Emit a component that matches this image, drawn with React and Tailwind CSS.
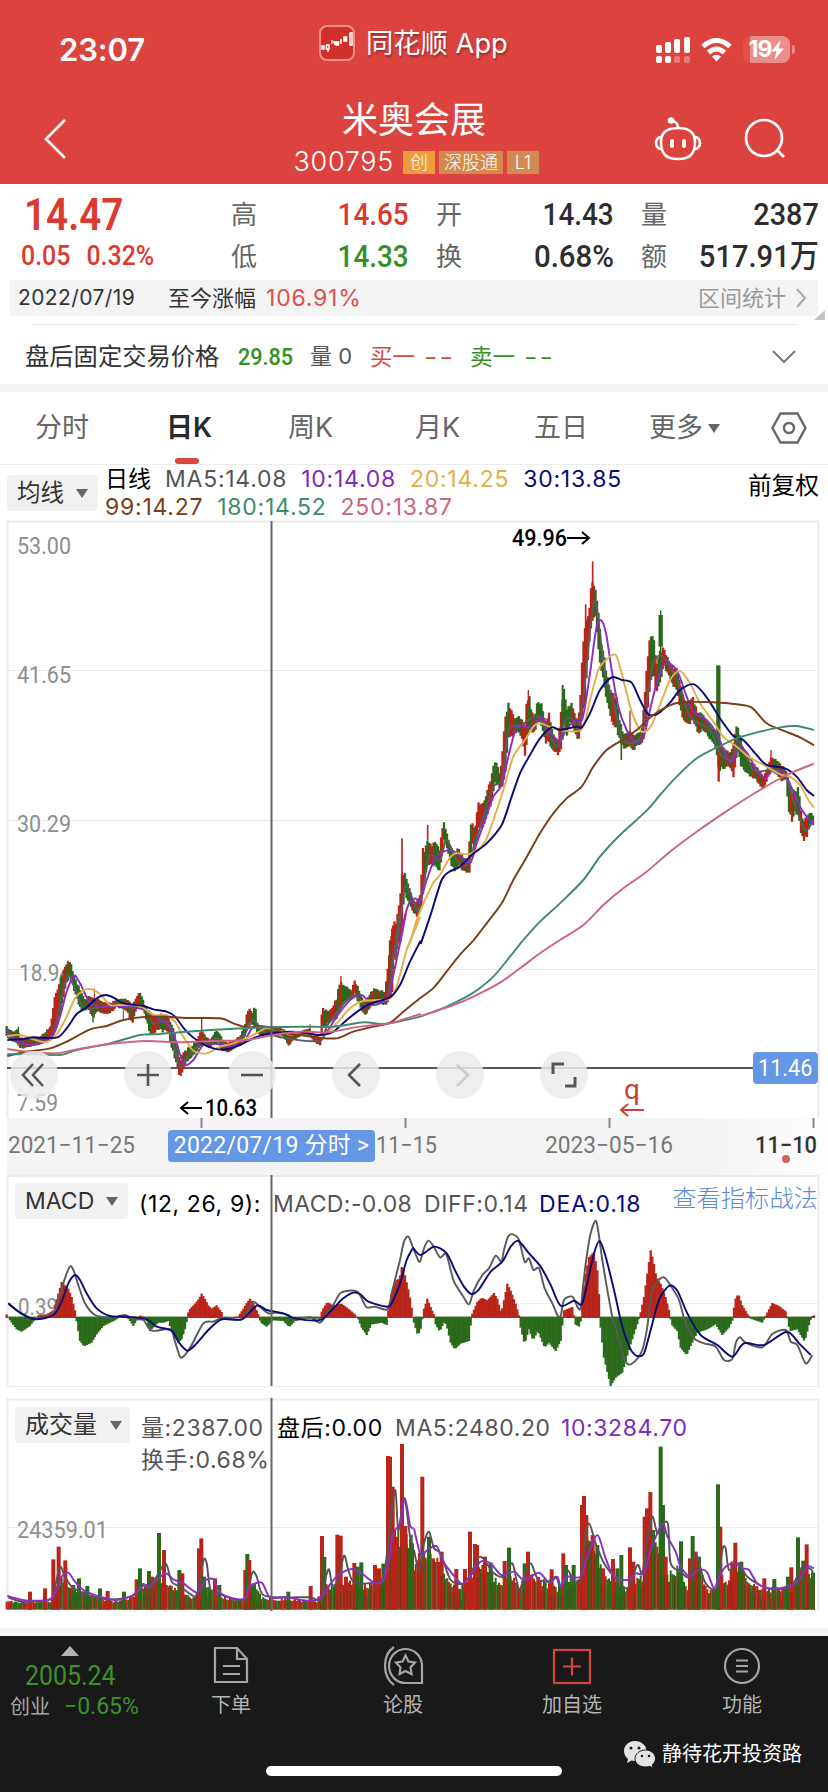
import React from "react";

const RED = "#b92519";
const GREEN = "#2c6a1b";
const AXIS_FONT = "Roboto, 'Liberation Sans', sans-serif";

// Plot coordinates are in thirds of a pixel, relative to the group they are drawn in.
// [x, high, low, direction]  r = up, g = down, m = mixed
const candlesLeft = `20 318 350 g,32 327 365 g,42 333 365 g,52 322 370 g,60 350 388 m,80 355 385 m,100 350 380 m,120 350 372 m,140 327 370 m,152 318 355 r,160 250 345 r,170 200 330 r,180 170 290 r,190 145 240 r,198 122 200 r,210 125 170 g,215 130 190 g,222 165 215 g,232 185 245 g,245 215 275 g,255 238 272 g,265 225 272 m,280 232 300 g,295 235 275 m,315 245 285 r,335 245 278 r,350 238 262 m,370 232 270 g,385 240 285 m,396 250 315 m,407 235 280 r,415 218 260 r,422 215 262 g,435 255 285 g,450 270 350 g,460 285 350 r,475 285 330 m,490 275 340 g,505 290 335 r,515 300 390 g,525 340 425 g,532 380 445 g,540 420 475 r,548 400 460 r,560 385 430 r,575 375 415 g,590 360 400 g,600 330 385 r,607 325 375 r,615 345 375 g,630 360 385 m,645 332 372 g,655 332 370 g,665 350 395 m,680 365 400 m,700 360 388 r,720 345 375 r,735 315 355 g,742 265 320 r,750 262 315 r,758 275 320 g,766 253 325 g,772 310 340 g,790 325 355 m,820 315 345 m,850 325 350 g,865 345 380 m,880 345 362 m,910 330 345 m,930 325 350 m,945 345 368 r,962 350 378 r,966 255 345 r,975 265 320 g,990 268 310 m,1000 255 305 r,1010 230 300 r,1015 195 290 r,1023 175 270 r,1032 195 250 g,1045 200 245 g,1055 210 240 m,1064 178 225 r,1075 200 250 g,1085 225 275 g,1095 245 290 m,1110 215 265 m,1125 200 250 m,1140 208 255 g,1155 208 260 m,1163 140 265 r,1172 65 240 r,1180 -5 200 r`;
const candlesRight = `90 1200 1340 r,100 1130 1290 r,108 1140 1250 r,118 1080 1210 r,126 990 1190 r,133 990 1060 g,145 1030 1090 g,160 1080 1120 g,172 1080 1135 m,182 1050 1120 r,188 905 1080 r,195 930 1020 r,203 885 980 g,215 915 980 r,228 898 980 g,238 930 1000 g,245 860 960 r,252 843 900 g,262 880 930 g,272 915 975 g,285 940 1000 g,295 920 980 m,310 950 995 m,325 955 1000 g,330 860 1000 r,337 845 920 g,345 870 930 m,355 775 880 r,365 790 870 r,375 770 850 m,385 735 820 m,395 700 790 r,403 655 740 g,412 670 730 g,420 700 755 m,428 620 740 r,436 510 720 r,445 485 610 g,455 510 600 r,465 535 580 g,475 525 580 g,485 535 600 m,495 545 650 r,500 480 630 r,507 452 570 g,515 510 585 r,525 520 580 m,533 480 550 g,545 490 560 g,555 540 610 m,567 512 620 r,575 560 625 g,585 585 640 m,595 600 650 r,603 510 640 r,612 433 560 g,620 510 600 g,632 482 545 g,643 510 580 m,653 540 605 m,660 490 600 r,668 290 550 r,678 200 480 r,685 230 340 m,692 150 290 r,698 110 240 r,708 145 240 g,715 200 330 g,722 290 390 g,732 340 440 g,742 400 500 g,750 440 530 g,760 450 555 r,770 470 570 g,780 540 610 g,790 575 625 m,800 580 630 g,810 570 620 r,820 580 640 m,830 580 620 g,845 570 615 m,853 465 590 r,862 350 540 r,871 265 450 r,880 275 400 g,890 360 470 r,900 330 430 g,912 320 380 r,920 345 400 g,930 365 420 m,940 385 440 m,950 375 460 g,962 430 520 g,972 470 550 g,985 490 560 m,997 465 550 r,1010 500 565 m,1015 520 590 r,1025 510 570 g,1035 530 580 m,1050 550 600 g,1065 570 620 g,1078 600 700 r,1085 610 690 g,1095 620 690 m,1110 640 680 m,1120 600 725 r,1132 548 640 g,1145 600 690 g,1155 640 700 g,1170 660 710 g,1185 670 720 m,1200 690 740 m,1212 705 752 r,1222 680 720 r,1233 650 700 r,1245 655 700 g,1265 670 725 m,1278 690 720 m,1285 710 810 g,1295 740 850 r,1305 750 820 m,1315 735 840 g,1325 820 890 m,1332 840 905 r,1342 820 890 m,1352 815 850 g,1362 825 860 g`;

// thin outliers: [x, top, bottom, colour, width]
const wicksLeft = [
  [204, 122, 160, RED, 5], [283, 205, 240, RED, 3], [279, 270, 308, GREEN, 4], [370, 260, 297, GREEN, 3],
  [605, 292, 350, RED, 4], [930, 312, 340, RED, 3], [1023, 168, 200, RED, 4], [55, 320, 345, GREEN, 4],
];
const wicksRight = [
  [126, 895, 1100, RED, 5], [203, 855, 900, RED, 5], [698, 64, 150, RED, 5], [677, 193, 300, RED, 5],
  [784, 600, 660, GREEN, 5], [810, 512, 590, RED, 4], [902, 225, 320, GREEN, 13], [902, 211, 340, GREEN, 4],
  [1075, 376, 620, GREEN, 13], [1076, 640, 725, RED, 7], [1233, 630, 660, RED, 4],
  [608, 435, 520, GREEN, 6], [505, 450, 500, RED, 4],
];

const maLeft = [
  ["#5c5c5c", "20 340,60 372,120 368,155 350,172 290,190 210,206 165,224 205,250 262,300 262,350 250,400 262,430 258,460 310,500 305,520 370,540 440,570 400,610 370,650 355,690 380,735 340,760 300,790 335,860 355,960 362,980 320,1020 265,1060 225,1100 255,1160 235,1180 110,1200 -20"],
  ["#8a2fc4", "20 330,50 360,90 374,130 368,160 345,180 290,200 215,222 167,240 190,270 248,310 262,350 258,400 262,440 272,480 300,510 318,530 370,552 434,580 420,610 375,650 372,690 378,730 368,760 320,800 322,850 335,900 340,950 345,980 335,1010 290,1050 240,1085 225,1110 245,1160 240,1180 165,1200 70,1218 -20"],
  ["#e2b04a", "22 348,60 345,100 358,140 366,172 340,200 290,225 235,250 212,275 208,300 222,330 255,360 255,420 258,460 285,500 285,525 305,550 350,580 392,620 400,660 380,700 370,750 350,800 325,850 335,900 340,970 345,1010 310,1050 265,1090 243,1165 237,1190 200,1220 90,1245 30,1260 -10"],
  ["#0a0a78", "22 360,70 357,100 352,170 353,200 325,230 282,260 262,290 235,318 225,345 235,370 250,430 258,460 268,500 275,525 290,560 335,600 367,640 385,680 388,720 375,760 355,800 342,880 335,960 345,1000 335,1040 300,1090 262,1130 245,1170 232,1200 195,1230 125,1262 62"],
  ["#7b3d18", "22 408,80 395,150 385,200 365,270 328,320 318,370 300,440 290,500 290,560 294,660 295,700 310,740 322,800 320,860 340,900 345,950 352,1010 355,1060 335,1120 320,1170 308,1210 275,1260 235"],
  ["#3f8a70", "22 403,100 402,180 405,230 390,330 370,420 345,480 342,560 335,700 326,800 322,900 320,1000 320,1090 307,1140 312,1180 308,1260 290"],
  ["#cf6480", "22 387,80 395,170 400,230 388,330 372,440 363,540 367,640 363,740 360,820 345,900 335,980 337,1080 320,1170 310,1210 298,1262 282"],
];
const maRight = [
  ["#5c5c5c", "105 1260,118 1160,135 1040,155 1070,175 1110,195 1010,210 945,240 960,260 900,290 960,320 975,345 910,370 830,400 740,425 720,445 570,480 560,505 540,535 530,570 590,595 620,615 540,640 540,655 565,672 450,695 230,708 190,735 400,760 490,790 600,840 595,862 470,880 370,910 350,960 440,990 530,1050 570,1080 640,1115 660,1135 600,1180 690,1230 690,1275 700,1300 780,1335 870,1360 840"],
  ["#8a2fc4", "120 1210,130 1150,145 1095,165 1075,180 1085,200 1020,225 955,250 935,275 932,300 945,330 970,350 910,375 840,400 770,425 735,445 650,470 560,495 560,520 560,545 530,570 575,600 605,620 565,650 540,668 535,690 400,708 270,722 240,738 280,755 390,775 500,800 570,825 605,850 595,870 510,890 430,915 370,950 390,980 470,1000 515,1040 540,1070 580,1095 640,1115 665,1140 620,1165 645,1190 690,1215 715,1240 690,1275 705,1300 755,1320 800,1340 830,1362 855"],
  ["#e2b04a", "150 1210,170 1140,195 1080,220 1028,240 1005,265 960,285 940,310 942,335 940,375 905,400 840,430 750,460 650,495 600,520 560,540 550,600 570,665 568,690 480,715 390,740 358,768 346,790 420,815 515,840 570,855 575,875 555,900 495,930 420,960 393,990 430,1020 490,1060 545,1090 590,1130 620,1165 650,1220 680,1260 703,1290 710,1320 735,1345 780,1362 803"],
  ["#0a0a78", "182 1212,210 1130,245 1020,268 995,300 980,335 945,380 910,425 855,455 770,480 700,510 645,540 595,575 562,600 570,650 560,665 562,690 520,720 450,755 412,785 420,815 428,840 480,865 523,895 520,930 488,960 450,1002 433,1040 472,1080 535,1120 588,1150 600,1190 645,1220 675,1275 685,1310 710,1340 750,1362 768"],
  ["#7b3d18", "340 1202,380 1150,425 1090,460 1020,495 960,540 880,580 820,620 775,665 740,700 680,740 630,790 598,830 570,880 525,940 492,990 486,1060 487,1130 493,1175 503,1220 550,1270 572,1320 592,1362 616"],
  ["#3f8a70", "488 1202,540 1145,600 1090,670 1020,720 950,780 885,860 812,900 765,950 710,1010 655,1080 618,1130 595,1200 575,1260 562,1310 558,1362 570"],
  ["#cf6480", "600 1200,670 1155,730 1095,790 1045,860 995,930 935,1010 875,1090 820,1180 762,1280 705,1362 671"],
];

const macdLeft = "20 8,28 -5,50 -35,65 -42,90 -25,105 -5,115 5,140 8,160 20,172 60,185 105,195 95,205 85,215 60,225 20,229 -5,240 -70,252 -86,275 -75,290 -50,310 -25,345 -8,360 2,380 2,390 -10,400 -25,412 -5,417 5,430 2,440 -10,450 -40,460 -30,475 -15,490 -15,505 -10,515 -40,535 -75,545 -65,555 -35,562 -5,566 20,585 40,597 55,605 70,612 60,625 35,635 25,650 35,665 15,670 -2,715 2,730 25,742 45,750 55,762 40,775 8,782 -15,800 -27,820 -8,850 -10,868 -28,885 -10,890 -3,960 -3,966 20,982 45,1000 35,1025 40,1045 25,1065 8,1075 -5,1085 -30,1100 -52,1115 -20,1130 -18,1145 -15,1160 -22,1165 20,1175 70,1187 110,1198 115,1207 160,1215 125,1228 70,1238 10";
const macdRight = "0 -15,10 -48,18 -45,25 -5,30 25,40 55,50 30,60 8,65 -20,77 -42,90 -15,97 -20,110 -75,122 -95,140 -78,165 -70,172 -5,175 10,190 45,203 58,220 50,240 72,250 55,262 12,270 50,280 100,292 75,305 40,315 5,320 -30,332 -80,345 -35,357 -68,372 -40,392 -90,405 -75,425 -100,440 -70,447 -5,450 20,475 30,480 5,483 -20,498 -28,502 5,505 60,515 130,525 180,540 195,550 140,557 40,560 -30,570 -120,590 -205,605 -180,625 -165,650 -80,670 -20,678 5,690 60,700 130,710 200,718 170,727 120,740 100,755 60,768 10,772 -20,790 -40,800 -90,818 -113,830 -85,850 -45,880 -35,905 -20,925 -52,945 -30,957 -5,962 50,973 70,985 35,1000 10,1010 -3,1045 -15,1057 8,1075 42,1095 33,1118 15,1122 -20,1130 -40,1150 -35,1172 -72,1187 -15,1193 2,1200 5";
const diffLeft = "25 432,60 458,95 475,130 472,160 460,175 420,190 370,202 335,212 318,222 335,235 375,255 430,285 465,340 472,375 465,400 478,430 480,455 512,510 508,525 545,540 590,552 588,575 555,610 490,640 485,665 475,725 478,745 450,760 425,785 445,805 460,830 458,865 465,885 480,930 472,960 488,985 455,1000 435,1020 400,1045 392,1072 395,1085 415,1100 442,1125 440,1163 448,1175 400,1190 340,1200 300,1212 245,1225 230,1238 260";
const deaLeft = "25 430,60 458,105 478,160 465,185 425,205 370,225 345,240 360,260 400,290 445,330 468,380 470,440 478,470 500,515 512,535 545,562 572,590 550,625 510,665 478,725 478,770 437,800 450,850 460,885 475,960 480,1000 445,1030 415,1060 398,1080 402,1105 425,1163 440,1180 420,1200 370,1220 300,1238 265";
const diffRight = "-4 260,8 290,18 305,30 265,43 242,58 258,78 292,95 280,105 310,120 365,145 405,165 433,180 390,205 345,225 325,245 287,262 305,270 270,282 230,297 223,315 240,332 305,345 295,358 330,375 325,392 385,415 430,430 465,440 468,450 420,475 410,490 440,500 445,508 370,518 290,530 220,545 182,553 215,565 300,580 390,595 470,610 520,625 580,642 613,665 602,685 570,700 500,712 400,725 370,750 352,775 385,795 420,815 490,840 535,870 550,905 560,930 600,955 597,965 550,978 532,995 548,1045 562,1075 522,1115 510,1130 545,1150 555,1175 610,1195 585";
const deaRight = "-4 262,20 285,60 260,98 280,125 335,150 380,172 402,195 388,230 335,265 305,290 260,313 243,345 280,380 320,410 375,440 437,480 422,503 433,520 370,540 280,557 243,575 290,600 390,625 500,650 568,670 588,690 580,710 510,735 420,765 378,790 392,820 460,860 525,910 555,955 590,990 550,1050 555,1118 515,1155 550,1190 585";

const volBaseLeft = "20 635,150 635,165 600,190 565,210 590,250 605,340 635,400 618,430 590,480 565,520 590,580 625,610 585,640 600,680 628,735 628,750 580,790 625,950 632,970 590,1050 570,1100 590,1160 550,1168 440,1238 430";
const volBaseRight = "0 540,25 480,60 485,100 570,140 600,165 560,200 520,240 560,260 580,290 540,315 595,350 540,380 570,430 595,470 560,500 570,505 450,530 450,570 560,640 595,685 560,700 430,730 480,760 560,800 530,820 590,850 520,880 600,905 590,915 510,935 580,965 510,1000 570,1050 598,1110 595,1160 550,1200 550";
const volSpikesLeft = "90 605 r,135 595 r,160 508 r,176 470 r,196 511 r,220 585 g,237 565 g,262 588 g,300 595 g,323 603 r,372 605 g,410 568 r,420 535 g,447 543 g,457 560 r,477 429 g,492 480 r,512 600 g,538 540 g,547 550 r,597 475 r,604 445 r,612 560 g,645 565 r,658 585 g,736 540 r,742 492 g,748 510 r,762 580 g,865 605 g,932 588 r,966 438 r,973 501 g,1012 434 r,1022 437 r,1038 560 r,1063 519 r,1073 530 g,1084 517 g,1125 525 r,1137 535 r,1150 521 g,1164 198 r,1170 200 r,1178 290 r,1190 440 r,1206 162 r,1216 408 r,1228 485 g,1236 460 g";
const volSpikesRight = "25 260 r,45 440 g,83 485 r,127 537 r,153 537 r,168 425 r,183 462 r,189 465 r,213 500 r,230 518 g,272 513 r,285 473 g,332 520 g,342 485 r,413 538 r,448 490 r,456 525 g,479 525 g,504 345 r,510 318 r,517 375 r,525 455 g,536 435 r,550 465 g,567 535 r,597 507 r,610 535 g,622 495 g,648 472 r,658 515 r,692 380 r,699 355 r,709 306 r,717 420 g,747 345 g,740 170 g,755 500 r,801 454 g,828 505 r,836 438 g,845 485 r,855 500 g,919 410 r,912 283 g,955 515 r,964 458 r,982 515 g,1051 565 r,1081 567 g,1122 560 g,1132 532 r,1152 442 g,1168 512 g,1178 463 r,1197 548 g";
const volMa5Left = "25 622,70 635,150 628,165 590,180 530,195 560,215 590,240 605,300 625,350 628,400 615,430 582,445 595,470 560,497 520,515 575,540 590,580 618,592 610,610 512,620 520,632 600,660 612,700 628,735 625,757 548,770 560,790 615,860 622,930 622,962 630,975 570,987 538,997 585,1015 570,1032 497,1045 540,1060 575,1100 580,1150 560,1170 400,1186 300,1195 420,1213 325,1230 440,1240 480";
const volMa10Left = "22 618,60 628,90 632,150 628,170 600,185 560,205 548,225 575,250 600,300 620,350 630,400 615,430 588,450 590,470 570,497 550,520 568,550 580,592 608,615 572,640 568,660 608,700 625,735 625,750 590,785 578,810 622,860 622,920 632,960 625,985 590,1015 555,1055 537,1085 550,1125 580,1150 570,1165 520,1180 430,1200 400,1215 325,1230 405,1240 415";
const volMa5Right = "0 480,15 540,30 460,45 425,60 475,80 490,110 570,150 580,175 540,200 500,240 550,270 560,295 520,315 600,330 560,350 520,370 565,400 575,425 560,440 590,460 540,480 575,498 570,512 460,525 400,545 460,570 520,600 560,640 595,670 525,685 550,700 450,715 380,730 430,745 405,762 402,770 520,800 545,825 560,845 490,870 570,890 595,910 590,925 480,935 475,945 540,975 520,1000 560,1060 595,1130 590,1165 530,1195 540";
const volMa10Right = "0 415,20 495,40 480,68 468,85 510,110 545,145 582,175 550,200 515,230 520,262 555,300 545,330 570,375 548,405 578,430 560,440 588,460 560,500 560,520 500,550 435,575 505,600 560,640 570,665 550,690 550,710 480,745 402,760 440,785 485,800 530,828 560,850 540,878 545,900 595,915 560,935 530,962 520,985 535,1005 540,1030 580,1065 595,1110 592,1150 575,1180 530,1200 535";

const parse = (str) => str.split(",").map((p) => p.split(" ").map((v) => (isNaN(v) ? v : Number(v))));

// small repeatable noise, keeps the bars from looking too regular
const noise = (i) => {
  const n = Math.sin(i * 127.1) * 43758.5453;
  return n - Math.floor(n);
};

// walk along the key points every `step` units
const sample = (points, step) => {
  const out = [];
  let k = 0;
  for (let x = points[0][0]; x <= points[points.length - 1][0]; x += step) {
    while (k < points.length - 2 && x > points[k + 1][0]) k++;
    const a = points[k];
    const b = points[k + 1];
    const t = (x - a[0]) / (b[0] - a[0]);
    const near = t < 0.5 ? a : b;
    out.push({ x, a: a[1] + (b[1] - a[1]) * t, b: a[2] + (b[2] - a[2]) * t, dir: near[3] });
  }
  return out;
};

const curve = (str) => {
  const p = parse(str);
  let d = `M${p[0][0]} ${p[0][1]}`;
  for (let i = 0; i < p.length - 1; i++) {
    const p0 = p[i - 1] || p[i];
    const p1 = p[i];
    const p2 = p[i + 1];
    const p3 = p[i + 2] || p2;
    d += `C${p1[0] + (p2[0] - p0[0]) / 7} ${p1[1] + (p2[1] - p0[1]) / 7} ${p2[0] - (p3[0] - p1[0]) / 7} ${p2[1] - (p3[1] - p1[1]) / 7} ${p2[0]} ${p2[1]}`;
  }
  return d;
};

const Line = ({ d, color }) => <path d={curve(d)} fill="none" stroke={color} strokeWidth="5.8" strokeLinejoin="round" />;

const Candles = ({ data, wicks }) => (
  <g>
    {sample(parse(data), 4.5).map((c, i) => {
      const up = c.dir === "r" ? noise(i) > 0.12 : c.dir === "g" ? noise(i) > 0.88 : i % 2 === 0;
      const size = c.b - c.a;
      const top = c.a + size * 0.16 * noise(i + 40);
      const bottom = c.b - size * 0.16 * noise(i + 90);
      return <rect key={i} x={c.x - 3.5} y={top} width="7" height={bottom - top} fill={up ? RED : GREEN} />;
    })}
    {wicks.map(([x, top, bottom, color, w], i) => (
      <rect key={i} x={x - w / 2} y={top} width={w} height={bottom - top} fill={color} />
    ))}
  </g>
);

const MacdBars = ({ data }) => (
  <g>
    {sample(parse(data), 5).map((b, i) => (
      <rect key={i} x={b.x - 3.5} y={b.a > 0 ? 473 - b.a - 2 : 470} width="7" height={Math.abs(b.a) + 3} fill={b.a > 0 ? RED : GREEN} />
    ))}
  </g>
);

const VolumeBars = ({ base, spikes }) => (
  <g>
    {sample(parse(base), 5).map((b, i) => {
      const y = b.a + (noise(i + 7) - 0.35) * (659 - b.a) * 0.3;
      return <rect key={i} x={b.x - 3} y={y} width="6" height={659 - y} fill={noise(i + 3) > 0.5 ? RED : GREEN} />;
    })}
    {parse(spikes).map(([x, top, dir]) => (
      <rect key={x} x={x - 6} y={top} width="12" height={659 - top} fill={dir === "r" ? RED : GREEN} />
    ))}
    {/* dark seams between neighbouring days */}
    {sample(parse(base), 10).map((b, i) => (
      <rect key={i} x={b.x} y={b.a + 30} width="3" height={Math.max(0, 629 - b.a)} fill="#6b3a12" opacity={noise(i + 5) > 0.35 ? 0.85 : 0} />
    ))}
  </g>
);

const AxisLabel = ({ x, y, w, children, color = "#8e8e8e", size = 23, weight = 400 }) => (
  <text x={x} y={y} textLength={w} lengthAdjust="spacingAndGlyphs" fontSize={size} fontWeight={weight} fill={color} fontFamily={AXIS_FONT}>
    {children}
  </text>
);

const StatusBar = () => (
  <div className="relative flex h-[92px] items-center justify-between pr-[33px] pl-[59px] text-white">
    <span className="pt-[8px] font-[Inter] text-[31px] font-semibold tracking-[-0.1px]">23:07</span>
    <div className="absolute top-[24px] left-[319px] flex items-center gap-[11px]">
      <svg width="36" height="36" viewBox="0 0 36 36">
        <rect x="1" y="1" width="34" height="34" rx="7" fill="#d12f2b" stroke="#f0908c" strokeWidth="2" />
        <g stroke="#fff" strokeWidth="1.5" fill="#fff">
          <rect x="3" y="21" width="2" height="3" />
          <rect x="7.5" y="20" width="2.5" height="4" fill="none" />
          <path d="M9 24v3M13 15v4M14 17h2v3" />
          <rect x="17" y="17" width="2.5" height="3" />
          <path d="M22 14v5M21 16h2" />
          <rect x="25" y="12" width="2.5" height="4" />
          <rect x="31" y="8" width="2" height="12" fill="none" />
        </g>
      </svg>
      <span className="pt-[2px] text-[27.3px] leading-[36px] whitespace-nowrap [text-shadow:1px_2px_2px_#0005]">同花顺 App</span>
    </div>
    <div className="flex items-center gap-[11px] pt-[7px]">
      <svg width="34" height="26" viewBox="0 0 34 26" fill="#fff">
        <rect x="0" y="8" width="6" height="8" rx="2" />
        <rect x="9" y="5" width="6" height="11" rx="2" />
        <rect x="18" y="2" width="6" height="14" rx="2" />
        <rect x="28" y="0" width="6" height="16" rx="2" />
        <rect x="0" y="19" width="6" height="7" rx="2" />
        <rect x="9" y="19" width="6" height="7" rx="2" />
        <rect x="18" y="19" width="6" height="7" rx="2" opacity=".3" />
        <rect x="28" y="19" width="6" height="7" rx="2" opacity=".3" />
      </svg>
      <svg width="31" height="24" viewBox="0 0 31 24" fill="none" stroke="#fff" strokeWidth="5">
        <path d="M2 8.5Q15.500 -3.500 29 8.500" />
        <path d="M7.500 14.500Q15.500 7.500 23.500 14.500" />
        <path d="M15.500 23.500l-4.500-5q4.500-3.500 9 0z" fill="#fff" stroke="none" />
      </svg>
      <div className="flex items-center gap-[2px]">
        <div className="flex h-[27px] w-[47px] items-center justify-center rounded-[8px] bg-gradient-to-r from-[#e2504a] from-15% to-[#ea8e8c] to-15%">
          <span className="font-[Inter] text-[23px] font-bold tracking-[-1px]">19</span>
          <svg width="13" height="20" viewBox="0 0 12 19" fill="#fff">
            <path d="M9 0L0 11h5L3 19l9-11H7z" />
          </svg>
        </div>
        <div className="h-[9px] w-[3px] rounded-r bg-[#ea8e8c]" />
      </div>
    </div>
  </div>
);

const TitleBar = () => (
  <div className="flex h-[92px] items-start justify-between pr-[42px] pl-[43px] text-white">
    <svg className="mt-[26px]" width="24" height="42" viewBox="0 0 24 42" fill="none" stroke="#fff" strokeWidth="2.6">
      <path d="M22 2L3 21l19 19" />
    </svg>
    <div className="ml-[104px] flex w-[300px] flex-col items-center">
      <h1 className="pt-[2px] pl-[3px] text-[36px] leading-[52px]">米奥会展</h1>
      <div className="flex w-full items-center gap-[4px] pl-[31px]">
        <span className="mr-[5px] font-[Inter] text-[27px] leading-[32px] font-light tracking-[0.7px]">300795</span>
        <span className="flex h-[23px] w-[32px] items-center justify-center bg-[#f09a3e] text-[18px] font-light">创</span>
        <span className="flex h-[23px] w-[64px] items-center justify-center bg-[#d28a4f] text-[18px] font-light whitespace-nowrap">深股通</span>
        <span className="flex h-[23px] w-[32px] items-center justify-center bg-[#d28a4f] text-[18px] font-light">L1</span>
      </div>
    </div>
    <div className="flex items-center gap-[42px] pt-[25px]">
      <svg width="48" height="44" viewBox="0 0 48 44" fill="none" stroke="#fff" strokeWidth="2.6">
        <path d="M24 11c-13 0-17 6-17 14 0 12 5 17 17 17s17-5 17-17c0-8-4-14-17-14z" />
        <path d="M7 20c-3 0-5 3-5 6s2 6 5 6M41 20c3 0 5 3 5 6s-2 6-5 6" />
        <path d="M24 11c0-4-1-6-6-7" />
        <circle cx="17" cy="3.500" r="2" fill="#fff" />
        <path d="M18 24v5M30 24v5" strokeWidth="4" strokeLinecap="round" />
      </svg>
      <svg width="42" height="42" viewBox="0 0 42 42" fill="none" stroke="#fff" strokeWidth="2.700">
        <circle cx="20" cy="20" r="18" />
        <path d="M33 32l7 7" />
      </svg>
    </div>
  </div>
);

const Stat = ({ label, value, color = "text-[#2d2d2f]", scale = "scale-x-[0.87]" }) => (
  <div className="flex h-[42px] items-center justify-between">
    <span className="text-[26px] text-[#666]">{label}</span>
    <span className={`origin-right font-[Roboto,'Noto_Sans_CJK_SC',sans-serif] text-[32px] font-medium whitespace-nowrap ${scale} ${color}`}>{value}</span>
  </div>
);

const Quote = () => (
  <section className="h-[204px]">
    <div className="flex pt-[9px] pr-[9px]">
      <div className="w-[231px] pl-[21px] text-[#db3a30]">
        <div className="ml-[3px] h-[42px] origin-left scale-x-[0.86] pt-[1px] font-[Roboto] text-[45px] leading-[42px] font-semibold">14.47</div>
        <div className="flex h-[42px] origin-left scale-x-[0.89] items-center gap-[18px] font-[Roboto] text-[28px] font-medium">
          <span>0.05</span>
          <span>0.32%</span>
        </div>
      </div>
      <div className="grid flex-1 grid-cols-[178px_178px_178px] gap-x-[27px]">
        <Stat label="高" value="14.65" color="text-[#db3a30]" />
        <Stat label="开" value="14.43" />
        <Stat label="量" value="2387" scale="scale-x-[0.9]" />
        <Stat label="低" value="14.33" color="text-[#348f24]" />
        <Stat label="换" value="0.68%" scale="scale-x-[0.92]" />
        <Stat label="额" value="517.91万" scale="scale-x-[0.91]" />
      </div>
    </div>
    <div className="relative mx-[10px] mt-[3px] flex h-[36px] items-center bg-[#f4f4f4] pr-[12px] pl-[8px] text-[22px] text-[#333]">
      <span className="w-[150px] font-[Inter] text-[21px] tracking-[0.4px]">2022/07/19</span>
      <span className="w-[98px]">至今涨幅</span>
      <span className="font-[Inter] text-[23px] tracking-[0.8px] text-[#d9504c]">106.91%</span>
      <span className="ml-auto text-[#999]">区间统计</span>
      <svg className="ml-[10px]" width="10" height="20" viewBox="0 0 10 20" fill="none" stroke="#aaa" strokeWidth="2">
        <path d="M1 1l8 9-8 9" />
      </svg>
      <svg className="absolute top-[30px] right-[-7px]" width="11" height="10">
        <path d="M11 0v10H0z" fill="#c4c4c4" />
      </svg>
    </div>
    <div className="mx-[32px] mt-[8px] h-px bg-[#e6e6e6]" />
    <div className="flex h-[63px] items-center pr-[32px] pl-[25px] text-[24.3px] whitespace-nowrap text-[#333]">
      <span className="w-[213px]">盘后固定交易价格</span>
      <span className="w-[72px] font-[Roboto] text-[24px] font-medium text-[#348f24]">
        <span className="inline-block origin-left scale-x-[0.9]">29.85</span>
      </span>
      <span className="w-[60px] text-[22px] text-[#555]">量 0</span>
      <span className="w-[100px] text-[22.5px] text-[#d04a44]">买一<span className="ml-[9px] inline-block origin-left scale-x-[1.3] tracking-[1.6px]">--</span></span>
      <span className="text-[22.5px] text-[#348f24]">卖一<span className="ml-[9px] inline-block origin-left scale-x-[1.3] tracking-[1.6px]">--</span></span>
      <svg className="ml-auto" width="24" height="13" viewBox="0 0 24 13" fill="none" stroke="#777" strokeWidth="2">
        <path d="M1 1l11 11L23 1" />
      </svg>
    </div>
  </section>
);

const Caret = ({ className }) => (
  <i className={`block h-0 w-0 border-x-[6.5px] border-t-[9px] border-x-transparent border-t-[#666] ${className}`} />
);

const tabs = [
  { name: "分时", w: "w-[131px]" },
  { name: "日K", w: "w-[122px]", active: true },
  { name: "周K", w: "w-[127px]" },
  { name: "月K", w: "w-[119px]" },
  { name: "五日", w: "w-[115px]" },
  { name: "更多", w: "w-[122px]", caret: true },
];

const Tabs = () => (
  <nav className="flex h-[73px] items-center border-b border-[#ececec] pl-[35px] text-[27px] text-[#666]">
    {tabs.map((tab) => (
      <div key={tab.name} className={`flex h-full items-center pt-[1px] ${tab.w}`}>
        <span className={tab.active ? "relative flex h-full items-center font-semibold text-[#2a2a2c]" : ""}>
          {tab.name}
          {tab.active && <i className="absolute bottom-0 left-[9px] h-[6px] w-[24px] rounded-[3px] bg-[#d8463f]" />}
        </span>
        {tab.caret && <Caret className="ml-[5px]" />}
      </div>
    ))}
    <svg width="36" height="32" viewBox="0 0 36 32" fill="none" stroke="#666" strokeWidth="2.400">
      <path d="M9.500 1.500h17L34.500 16l-8 14.500h-17L1.500 16z" />
      <circle cx="18" cy="16" r="5" />
    </svg>
  </nav>
);

const Picker = ({ children, className }) => (
  <div className={`flex h-[36px] items-center justify-between rounded bg-[#f1f1f1] text-[#333] ${className}`}>
    {children}
    <Caret />
  </div>
);

const MaLegend = () => (
  <div className="flex h-[56px] pl-[7px] text-[23px] whitespace-nowrap">
    <Picker className="mt-[10px] w-[91px] pr-[10px] pl-[10px] text-[23.5px]">均线</Picker>
    <div className="ml-[7px] w-[632px] font-[Inter,'Noto_Sans_CJK_SC',sans-serif] tracking-[0.75px]">
      <div className="flex h-[29px] items-center gap-[14px]">
        <span className="tracking-normal text-black">日线</span>
        <span className="text-[#555]">MA5:14.08</span>
        <span className="text-[#7d2bbd]">10:14.08</span>
        <span className="text-[#dfb04c]">20:14.25</span>
        <span className="text-[#0a0a7c]">30:13.85</span>
      </div>
      <div className="flex h-[27px] items-center gap-[14px]">
        <span className="text-[#7b3d18]">99:14.27</span>
        <span className="text-[#3f8a70]">180:14.52</span>
        <span className="text-[#cf6480]">250:13.87</span>
      </div>
    </div>
    <span className="ml-auto pr-[9px] text-[23.7px] leading-[42px] text-black">前复权</span>
  </div>
);

const RoundButton = ({ d, color = "#555", w = 2.6, className = "" }) => (
  <div className={`h-[48px] w-[48px] rounded-full bg-[#ebebebd9] ${className}`}>
    <svg width="48" height="48" viewBox="0 0 48 48" fill="none" stroke={color} strokeWidth={w}>
      <path d={d} />
    </svg>
  </div>
);

const PriceChart = () => (
  <section className="relative h-[597px]">
    <svg className="block overflow-visible" width="828" height="597" viewBox="0 521 828 597">
      <g stroke="#e9e9e9" fill="none">
        <path d="M7 521.500H818.500V1118M7.500 521V1118" strokeWidth="2" />
        <path d="M8 670.500H817M8 820.500H817M8 969.500H817" />
      </g>
      <AxisLabel x="17" y="554" w="54">53.00</AxisLabel>
      <AxisLabel x="17" y="683" w="54">41.65</AxisLabel>
      <AxisLabel x="17" y="832" w="54">30.29</AxisLabel>
      <AxisLabel x="19" y="981" w="52">18.94</AxisLabel>
      <path d="M7 1068H818" stroke="#58595b" strokeWidth="2" />
      <g transform="translate(0 920) scale(.33333)">
        <Candles data={candlesLeft} wicks={wicksLeft} />
      </g>
      <g transform="translate(360 540) scale(.33333)">
        <Candles data={candlesRight} wicks={wicksRight} />
      </g>
      <g transform="translate(0 920) scale(.33333)">
        {maLeft.map(([color, d]) => <Line key={color} d={d} color={color} />)}
      </g>
      <g transform="translate(360 540) scale(.33333)">
        {maRight.map(([color, d]) => <Line key={color} d={d} color={color} />)}
        {/* long averages between the two ranges */}
        <Line color="#7b3d18" d="180 1375,222 1342,262 1292,300 1244,340 1202" />
        <Line color="#3f8a70" d="180 1430,222 1415,262 1399,320 1370,355 1348,400 1310,450 1250,488 1202" />
        <Line color="#cf6480" d="180 1428,222 1415,300 1388,370 1355,425 1325,480 1285,540 1240,600 1200" />
      </g>
      <path d="M271.500 521V1118" stroke="#666" strokeWidth="2" />
      <AxisLabel x="512" y="546" w="55" color="#000" weight="500" size={24}>49.96</AxisLabel>
      <path d="M567 538h22M582 532l7 6-7 6" fill="none" stroke="#000" strokeWidth="2" />
      <AxisLabel x="205" y="1116" w="52" color="#000" weight="500">10.63</AxisLabel>
      <path d="M202 1108h-21M188 1102l-7 6 7 6" fill="none" stroke="#000" strokeWidth="2" />
      <AxisLabel x="17" y="1111" w="41">7.59</AxisLabel>
      <text x="624" y="1099" fontSize="28" fill="#c9403a" fontFamily={AXIS_FONT}>q</text>
      <path d="M644 1110h-22M628 1104l-7 6 7 6" fill="none" stroke="#c9403a" strokeWidth="2" />
    </svg>
    <div className="absolute top-[530px] left-[10px] flex gap-[56px]">
      <RoundButton className="mr-[10px]" d="M23 13L13 24l10 11M33 13L23 24l10 11" />
      <RoundButton d="M13 24h22M24 13v22" />
      <RoundButton d="M13 24h22" />
      <RoundButton d="M28 13L17 24l11 11" />
      <RoundButton d="M21 14l11 10-11 11" color="#ccc" />
      <RoundButton d="M13 23V13h11M35 26v9H25" w={3} />
    </div>
    <div className="absolute top-[531px] left-[753px] flex h-[32px] w-[65px] items-center justify-center rounded bg-[#6497e6] font-[Roboto] text-[24px] leading-none text-white">
      <span className="scale-x-[0.9]">11.46</span>
    </div>
  </section>
);

const TimeAxis = () => (
  <div className="ml-[7px] h-[57px] bg-gradient-to-r from-[#f4f4f4] from-85% to-[#fdfdfd]">
    <div className="relative">
      <svg className="block" width="821" height="57" viewBox="7 1118 821 57">
        <path d="M201.500 1118v10M405.500 1118v10M609.500 1118v10M813.500 1118v10" stroke="#888" strokeWidth="2" />
        <AxisLabel x="8" y="1153" w="127" color="#777">2021−11−25</AxisLabel>
        <AxisLabel x="376" y="1153" w="61" color="#777">11−15</AxisLabel>
        <AxisLabel x="545" y="1153" w="128" color="#777">2023−05−16</AxisLabel>
        <AxisLabel x="755" y="1153" w="62" color="#333" weight="500">11−10</AxisLabel>
        <circle cx="786" cy="1159" r="4" fill="#d0605c" />
      </svg>
      <div className="absolute top-[12px] left-[161px] flex h-[32px] w-[207px] items-center justify-center rounded bg-[#6497e6] font-[Roboto,'Noto_Sans_CJK_SC',sans-serif] text-[23px] tracking-[0.25px] whitespace-nowrap text-white">
        2022/07/19 分时 &gt;
      </div>
    </div>
  </div>
);

const MacdPanel = () => (
  <section className="relative h-[211px]">
    <svg className="absolute inset-0" width="828" height="212" viewBox="0 1175 828 212">
      <rect x="7.500" y="1176" width="811" height="211" fill="none" stroke="#ebebeb" strokeWidth="2" />
      <path d="M8 1303.500H818" stroke="#ececec" />
      <AxisLabel x="18" y="1315" w="40">0.39</AxisLabel>
      <g transform="translate(0 1160) scale(.33333)">
        <MacdBars data={macdLeft} />
        <Line d={diffLeft} color="#5a5a5a" />
        <Line d={deaLeft} color="#0a0a78" />
      </g>
      <g transform="translate(414 1160) scale(.33333)">
        <MacdBars data={macdRight} />
        <Line d={diffRight} color="#5a5a5a" />
        <Line d={deaRight} color="#0a0a78" />
      </g>
      <path d="M271.500 1175V1386" stroke="#666" strokeWidth="2" />
    </svg>
    <div className="relative flex items-start pt-[8px] pr-[10px] pl-[15px] font-[Inter,'Noto_Sans_CJK_SC',sans-serif] text-[23px] whitespace-nowrap">
      <Picker className="w-[113px] pr-[10px] pl-[10px]">MACD</Picker>
      <div className="flex pt-[3px] leading-[36px] tracking-[0.6px]">
        <span className="ml-[11px] w-[134px] text-black">(12, 26, 9):</span>
        <span className="w-[151px] tracking-[0.4px] text-[#555]">MACD:-0.08</span>
        <span className="w-[115px] text-[#555]">DIFF:0.14</span>
        <span className="tracking-[0.9px] text-[#0a0a7c]">DEA:0.18</span>
      </div>
      <a className="ml-auto text-[24.3px] leading-[30px] font-light text-[#5b8bd6]">查看指标战法</a>
    </div>
  </section>
);

const VolumePanel = () => (
  <section className="relative mt-[12px] h-[230px]">
    <svg className="absolute inset-0" width="828" height="213" viewBox="0 1398 828 213">
      <path d="M7.500 1610V1399.500H818.500V1610" fill="none" stroke="#ebebeb" strokeWidth="2" />
      <path d="M8 1527.500H818" stroke="#ececec" />
      <AxisLabel x="17" y="1538" w="91">24359.01</AxisLabel>
      <g transform="translate(0 1390) scale(.33333)">
        <VolumeBars base={volBaseLeft} spikes={volSpikesLeft} />
        <Line d={volMa5Left} color="#555" />
        <Line d={volMa10Left} color="#8a2fc4" />
      </g>
      <g transform="translate(414 1390) scale(.33333)">
        <VolumeBars base={volBaseRight} spikes={volSpikesRight} />
        <Line d={volMa5Right} color="#555" />
        <Line d={volMa10Right} color="#8a2fc4" />
      </g>
      <path d="M271.500 1398V1611" stroke="#666" strokeWidth="2" />
    </svg>
    <div className="relative flex pt-[9px] pl-[15px] font-[Inter,'Noto_Sans_CJK_SC',sans-serif] text-[23px] whitespace-nowrap">
      <Picker className="w-[115px] pr-[8px] pl-[10px] text-[24px]">成交量</Picker>
      <div className="ml-[11px] pt-[4px] tracking-[0.6px] text-[#555]">
        <div className="flex leading-[34px]">
          <span className="w-[136px]">量:2387.00</span>
          <span className="w-[118px] text-black">盘后:0.00</span>
          <span className="w-[166px]">MA5:2480.20</span>
          <span className="text-[#7d2bbd]">10:3284.70</span>
        </div>
        <div className="leading-[30px]">换手:0.68%</div>
      </div>
    </div>
  </section>
);

const NavItem = ({ label, className, children }) => (
  <div className={`flex flex-col items-center ${className}`}>
    <svg width="44" height="40" viewBox="0 0 44 40" fill="none" stroke="#a5a5a5" strokeWidth="2.200">{children}</svg>
    <span className="mt-[5px] text-[20px] leading-[28px] text-[#b4b4b4]">{label}</span>
  </div>
);

const BottomBar = () => (
  <footer className="relative h-[164px] border-t-[8px] border-[#f4f4f4] bg-[#191919]">
    <div className="flex h-[87px] pt-[10px]">
      <div className="w-[142px]">
        <div className="ml-[61px] h-0 w-0 border-x-[9px] border-b-[10px] border-x-transparent border-b-[#b4b4b4]" />
        <div className="ml-[25px] origin-left scale-x-[0.89] pt-[3px] font-[Roboto] text-[28px] leading-[34px] text-[#3c9229]">2005.24</div>
        <div className="flex items-center gap-[14px] pt-[1px] pl-[10px] leading-[26px] whitespace-nowrap">
          <span className="text-[20px] text-[#a5a5a5]">创业</span>
          <span className="origin-left font-[Roboto] text-[23px] text-[#3c9229]">−0.65%</span>
        </div>
      </div>
      <NavItem label="下单" className="ml-[57px] w-[64px]">
        <path d="M6 3h22l10 11v23H6z" transform="translate(0 -1)" />
        <path d="M28 2v11h10M14 20h17M14 28h17" />
      </NavItem>
      <NavItem label="论股" className="ml-[108px] w-[64px]">
        <path d="M41 37V19a16.500 17 0 1 0-16.500 18z" />
        <path d="M13 1C1 9 1 30 13 39" />
        <path d="M24.500 9.500l3 6 6.500 1-4.500 4.800 1 6.700-6-3-6 3 1-6.700-4.500-4.800 6.500-1z" />
      </NavItem>
      <NavItem label="加自选" className="ml-[105px] w-[64px]">
        <rect x="4" y="4" width="36" height="33" stroke="#d2473f" />
        <path d="M13 20.500h18M22 11.500v18" stroke="#d2473f" />
      </NavItem>
      <NavItem label="功能" className="ml-[106px] w-[64px]">
        <circle cx="22" cy="20" r="17" />
        <path d="M16 14.500h12M16 20h12M16 25.500h12" />
      </NavItem>
    </div>
    <div className="mt-[17px] flex items-center justify-end gap-[6px] pr-[26px] text-[20px] leading-[28px] text-white">
      <svg width="32" height="27" viewBox="0 0 32 27">
        <path d="M11 0C4.500 0 0 4.500 0 10c0 3.500 1.800 6 4 8l-1 4 4.500-2.500c5 1.500 15-1 15-9.500C22.500 4.500 17.500 0 11 0z" fill="#e4e4e4" />
        <path d="M21.500 9C15.500 9 11 13 11 17.500S15 26 21.500 26c1.500 0 3-.3 4-.7l3.500 1.700-.8-3.200c2-1.500 3.300-3.800 3.300-6.300C31.500 13 27 9 21.500 9z" fill="#e4e4e4" stroke="#191919" />
        <g fill="#191919">
          <circle cx="7" cy="7" r="1.500" />
          <circle cx="15" cy="7" r="1.500" />
          <circle cx="18" cy="15" r="1.300" />
          <circle cx="25" cy="15" r="1.300" />
        </g>
      </svg>
      <span>静待花开投资路</span>
    </div>
    <div className="absolute top-[130px] left-[266px] h-[10px] w-[296px] rounded-full bg-white" />
  </footer>
);

const App = () => (
  <div className="h-[1792px] w-[828px] overflow-hidden bg-white font-[Inter,'Noto_Sans_CJK_SC',sans-serif]">
    <header className="h-[184px] bg-[#dc433f]">
      <StatusBar />
      <TitleBar />
    </header>
    <Quote />
    <div className="mt-[-4px] h-[8px] bg-[#f4f4f4]" />
    <Tabs />
    <MaLegend />
    <PriceChart />
    <TimeAxis />
    <MacdPanel />
    <VolumePanel />
    <BottomBar />
  </div>
);

export default App;
